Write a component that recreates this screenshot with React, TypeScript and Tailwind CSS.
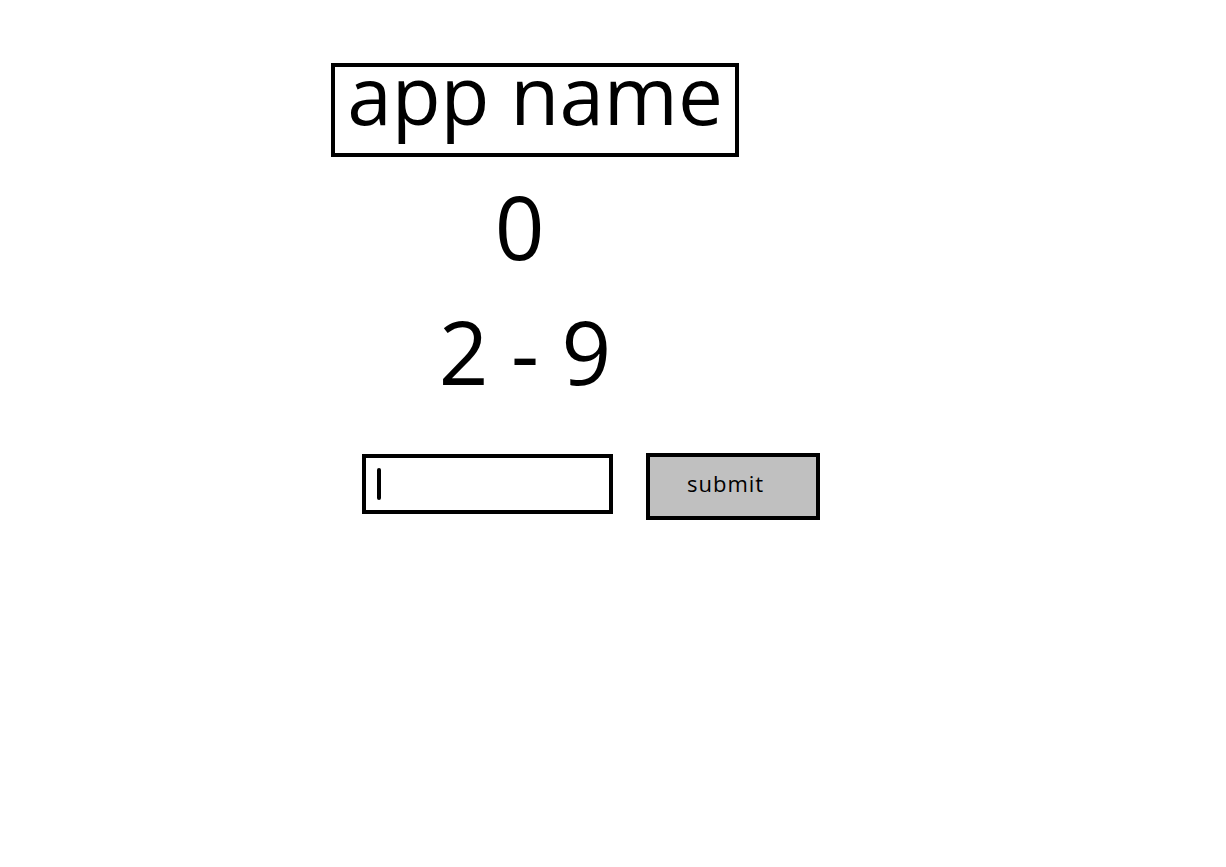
import React from "react";

export default function App() {
  return (
    <div className="min-h-screen bg-white text-black font-['Open_Sans',sans-serif] pl-[331px] pt-[63px]">
      {/* Title + score */}
      <div className="w-[408px] flex flex-col">
        <h1 className="h-[94px] border-4 border-black text-center text-[80px] leading-[54px] font-normal">
          app name
        </h1>
        <div className="mt-[29px] pr-[31px] text-center text-[87px] leading-[80px]">0</div>
        <div className="mt-[45px] pr-[20px] text-center text-[87px] leading-[80px]">2 - 9</div>
      </div>

      {/* Answer row */}
      <div className="mt-[62px] ml-[31px] flex items-start gap-[33px]">
        <label className="mt-[1px] w-[251px] h-[60px] border-4 border-black flex items-center pl-[11px] gap-1">
          <span className="w-[4px] h-[32px] rounded-full bg-black shrink-0" />
          <input
            type="text"
            className="flex-1 min-w-0 h-full bg-transparent outline-none text-[20px]"
            aria-label="answer"
          />
        </label>
        <button className="w-[174px] h-[67px] border-4 border-black bg-[#c0c0c0] flex items-start pt-[11px] pl-[37px] text-[22px] leading-[30px] tracking-[1px]">
          submit
        </button>
      </div>
    </div>
  );
}
